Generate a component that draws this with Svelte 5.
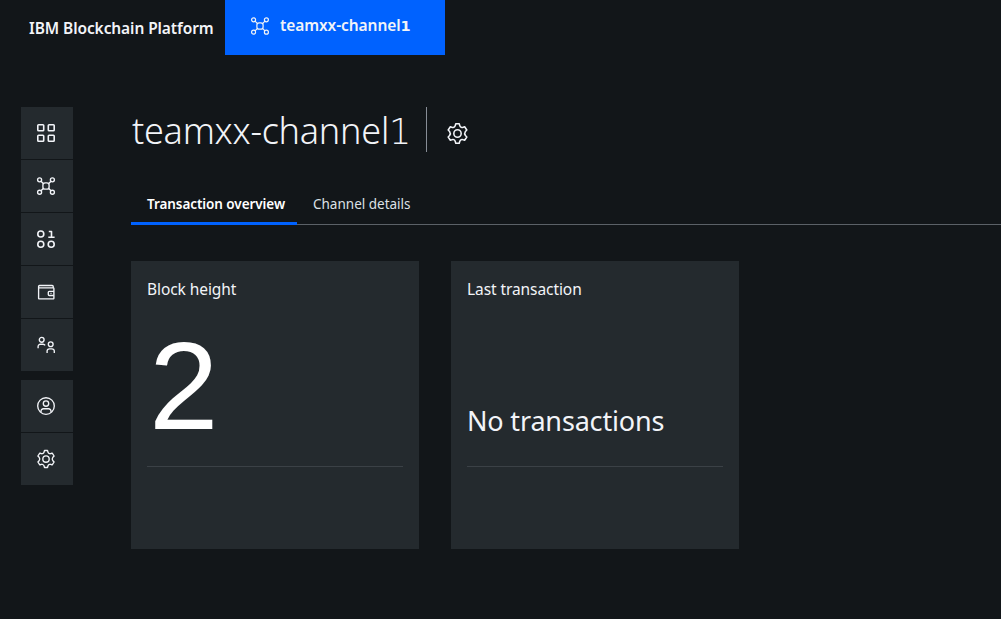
<script>
  const primary = ['grid', 'network', 'binary', 'wallet', 'people'];
  const secondary = ['account', 'settings'];
  const cards = [
    { title: 'Block height', value: '2', big: true },
    { title: 'Last transaction', value: 'No transactions', big: false }
  ];
</script>

{#snippet icon(name)}
  <svg class="icon {name}" viewBox="0 0 20 20" aria-hidden="true">
    {#if name === 'grid'}
      <rect x="1.8" y="1.8" width="5.9" height="5.9" rx=".8" />
      <rect x="12.3" y="1.8" width="5.9" height="5.9" rx=".8" />
      <rect x="1.8" y="12.3" width="5.9" height="5.9" rx=".8" />
      <rect x="12.3" y="12.3" width="5.9" height="5.9" rx=".8" />
    {:else if name === 'network'}
      <rect x="6.9" y="6.9" width="6.2" height="6.2" rx="2.2" />
      <circle cx="3.6" cy="3.8" r="2" />
      <circle cx="16.4" cy="3.8" r="2" />
      <circle cx="3.6" cy="16.2" r="2" />
      <circle cx="16.4" cy="16.2" r="2" />
      <path d="M5 5.2l2.5 2.5M15 5.2l-2.5 2.5M5 14.8l2.5-2.5M15 14.8l-2.5-2.5" />
    {:else if name === 'binary'}
      <circle cx="4.8" cy="5" r="3" />
      <circle cx="4.8" cy="15.2" r="3" />
      <circle cx="15.2" cy="15.2" r="3" />
      <path d="M12.8 2.5h2.7V8M12.3 8.2h6.3" />
    {:else if name === 'wallet'}
      <path d="M17.2 5.9V4.5a1 1 0 0 0-1-1H3.6a1 1 0 0 0-1 1V16.2a.7.7 0 0 0 .7.7H17.2a.7.7 0 0 0 .7-.7V6.6a.7.7 0 0 0-.7-.7H2.6" />
      <path d="M17.9 9.3h-4.6a1 1 0 0 0-1 1v2.2a1 1 0 0 0 1 1h4.6M14.5 11.4h1" />
    {:else if name === 'people'}
      <circle cx="5.7" cy="4.8" r="2.4" />
      <path d="M2.1 13.2v-1.7a2.3 2.3 0 0 1 2.3-2.3h2.7a2.3 2.3 0 0 1 2 1.2" />
      <circle cx="14.7" cy="9.2" r="2.4" />
      <path d="M11.1 18v-1.9a2.3 2.3 0 0 1 2.3-2.3h2.6a2.3 2.3 0 0 1 2.3 2.3V18" />
    {:else if name === 'account'}
      <circle cx="10" cy="10" r="8.3" />
      <circle cx="10" cy="7.5" r="2.7" />
      <path d="M5 16.3v-1.2a2.4 2.4 0 0 1 2.4-2.4h5.2a2.4 2.4 0 0 1 2.4 2.4v1.2" />
    {:else}
      <circle cx="10" cy="10" r="3.2" />
      <path d="M8.5 1.5h3l.5 1.7q.4 1.3 1.7 1.5.6.1 1.3-.2l1.2-.4 1.9 2.9-1.2 1.2q-1.3 1.800 0 3.600l1.200 1.200-1.900 2.900-1.200-.4q-.7-.3-1.300-.2-1.300.2-1.700 1.500l-.5 1.700h-3l-.5-1.700q-.4-1.300-1.700-1.500-.6-.1-1.300.2l-1.200.4-1.900-2.900 1.200-1.200q1.300-1.800 0-3.600L1.900 7l1.900-2.900 1.200.4q.7.3 1.3.2 1.3-.2 1.700-1.500z" />
    {/if}
  </svg>
{/snippet}

<div class="app">
  <header>
    <div class="brand"><span>IBM Blockchain Platform</span></div>
    <div class="crumb">{@render icon('network')}<span>teamxx-channel<i>1</i></span></div>
  </header>
  <div class="body">
    <nav>
      <div class="group">
        {#each primary as name}<div class="item">{@render icon(name)}</div>{/each}
      </div>
      <div class="group">
        {#each secondary as name}<div class="item">{@render icon(name)}</div>{/each}
      </div>
    </nav>
    <main>
      <div class="heading">
        <h1><span>teamxx-channel<i>1</i></span></h1>
        <div class="config">{@render icon('settings')}</div>
      </div>
      <div class="tabs">
        <div class="tab active"><span>Transaction overview</span></div>
        <div class="tab"><span>Channel details</span></div>
      </div>
      <div class="cards">
        {#each cards as card}
          <section>
            <h2>{card.title}</h2>
            <div class="value" class:big={card.big}><span>{card.value}</span></div>
          </section>
        {/each}
      </div>
    </main>
  </div>
</div>

<style>
  :global(body) { margin: 0; background: #121619; }
  .app {
    box-sizing: border-box;
    height: 619px;
    overflow: hidden;
    background: #121619;
    color: #f2f4f8;
    font-family: "Noto Sans", "Open Sans", sans-serif;
    white-space: nowrap;
  }
  i { font-family: "DejaVu Sans", sans-serif; font-style: normal; }
  header { display: flex; height: 55px; }
  .brand {
    box-sizing: border-box;
    width: 225px;
    padding-left: 29px;
    font-size: 15.5px;
    font-weight: 600;
    letter-spacing: -0.09px;
    line-height: 56px;
  }
  .crumb {
    box-sizing: border-box;
    display: flex;
    align-items: center;
    width: 220px;
    padding: 0 0 4px 25px;
    gap: 10px;
    background: #0062ff;
    font-size: 15.5px;
    font-weight: 600;
    letter-spacing: -0.08px;
    line-height: 20px;
  }
  .crumb .icon { stroke-width: 1.2; }
  .crumb i { font-size: 14.5px; letter-spacing: 0; }
  .body { display: flex; padding-top: 52px; }
  nav { display: flex; flex-direction: column; gap: 9px; width: 52px; margin-left: 21px; }
  .group { display: flex; flex-direction: column; gap: 1px; }
  .item {
    display: flex;
    align-items: center;
    height: 52px;
    padding-left: 15px;
    background: #242a2e;
  }
  .icon {
    flex: none;
    width: 20px;
    height: 20px;
    fill: none;
    stroke: #f2f4f8;
    stroke-width: 1.35;
    stroke-linejoin: round;
  }
  .icon.grid, .icon.binary { stroke-width: 1.6; }
  main { flex: 1; min-width: 0; margin-left: 58px; }
  .heading { display: flex; height: 45px; }
  h1 {
    box-sizing: border-box;
    width: 296px;
    margin: 0;
    padding-left: 1px;
    border-right: 1px solid #878d96;
    font-size: 36px;
    font-weight: 300;
    letter-spacing: -0.25px;
    line-height: 48px;
  }
  h1 i { font-size: 35px; font-weight: 200; }
  .config { display: flex; align-items: center; padding: 7px 0 0 18.5px; }
  .config .icon { width: 23px; height: 23px; stroke-width: 1.35; }
  .tabs {
    display: flex;
    box-sizing: border-box;
    height: 40px;
    margin-top: 33px;
    border-bottom: 1px solid #5b6167;
  }
  .tab { box-sizing: border-box; height: 40px; padding-left: 16px; color: #dde1e6; font-size: 13.5px; line-height: 38px; }
  .active { width: 166px; border-bottom: 3px solid #0062ff; color: #fff; font-weight: 600; letter-spacing: -0.07px; }
  .cards { display: flex; gap: 32px; margin-top: 36px; }
  section { box-sizing: border-box; width: 288px; height: 288px; padding: 16px; background: #242a2e; }
  h2 { margin: 0; height: 24px; font-size: 15.5px; font-weight: 400; letter-spacing: -0.08px; line-height: 25px; }
  .value {
    box-sizing: border-box;
    height: 166px;
    padding-top: 100px;
    border-bottom: 1px solid #3b4146;
    font-size: 27px;
    letter-spacing: -0.17px;
    line-height: 40px;
  }
  .big {
    padding: 20px 0 0 2px;
    color: #fff;
    font-family: "Liberation Sans", sans-serif;
    font-size: 125px;
    line-height: 130px;
  }
</style>
